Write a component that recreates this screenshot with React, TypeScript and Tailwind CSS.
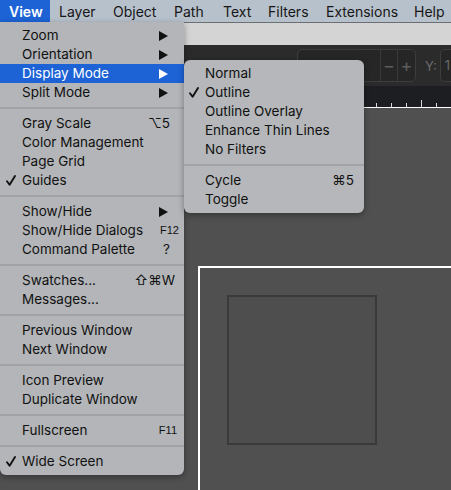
type Item = {
  label: string;
  check?: boolean;
  arrow?: boolean;
  active?: boolean;
  key?: string;
  small?: boolean;
  pr?: string;
};

const mainGroups: Item[][] = [
  [
    { label: 'Zoom', arrow: true },
    { label: 'Orientation', arrow: true },
    { label: 'Display Mode', arrow: true, active: true },
    { label: 'Split Mode', arrow: true },
  ],
  [
    { label: 'Gray Scale', key: '⌥5', pr: 'pr-[14px]' },
    { label: 'Color Management' },
    { label: 'Page Grid' },
    { label: 'Guides', check: true },
  ],
  [
    { label: 'Show/Hide', arrow: true },
    { label: 'Show/Hide Dialogs', key: 'F12', small: true, pr: 'pr-[5px]' },
    { label: 'Command Palette', key: '?', pr: 'pr-[14px]' },
  ],
  [
    { label: 'Swatches...', key: '⇧⌘W', pr: 'pr-[9px]' },
    { label: 'Messages...' },
  ],
  [{ label: 'Previous Window' }, { label: 'Next Window' }],
  [{ label: 'Icon Preview' }, { label: 'Duplicate Window' }],
  [{ label: 'Fullscreen', key: 'F11', small: true, pr: 'pr-[7px]' }],
  [{ label: 'Wide Screen', check: true }],
];

const subGroups: Item[][] = [
  [
    { label: 'Normal' },
    { label: 'Outline', check: true },
    { label: 'Outline Overlay' },
    { label: 'Enhance Thin Lines' },
    { label: 'No Filters' },
  ],
  [
    { label: 'Cycle', key: '⌘5', pr: 'pr-[10px]' },
    { label: 'Toggle' },
  ],
];

const Arrow = ({ light }: { light?: boolean }) => (
  <svg width="9" height="10" viewBox="0 0 9 10">
    <polygon points="0,0 9,5 0,10" fill={light ? '#ffffff' : '#111111'} />
  </svg>
);

const Check = () => (
  <svg width="10" height="11" viewBox="0 0 10 11">
    <path d="M1 6.2 L3.6 9.8 L9 1" fill="none" stroke="#111111" strokeWidth="1.9" strokeLinecap="round" strokeLinejoin="round" />
  </svg>
);

const Row = ({ item, sub }: { item: Item; sub?: boolean }) => (
  <div
    className={`flex h-[19px] items-center ${item.pr ?? 'pr-[16px]'} ${
      item.active ? 'bg-[#1d63d6] text-white' : 'text-[#111111]'
    }`}
  >
    <span className={`flex ${sub ? 'w-[21px] pl-[5px]' : 'w-[22px] pl-[6px]'}`}>
      {item.check && <Check />}
    </span>
    <span className="flex-1">{item.label}</span>
    {item.arrow && <Arrow light={item.active} />}
    {item.key && (
      <span
        className={
          item.small
            ? "text-[11px] font-medium font-['Liberation_Sans',sans-serif]"
            : "font-['Inter','DejaVu_Sans',sans-serif]"
        }
      >
        {item.key}
      </span>
    )}
  </div>
);

const Menu = ({ groups, sub }: { groups: Item[][]; sub?: boolean }) => (
  <div className="flex flex-col">
    {groups.map((g, i) => (
      <div key={i}>
        {i > 0 && (
          <div className="h-[12px] pt-[5px]">
            <div className="h-[2px] bg-[#a1a3a6]" />
          </div>
        )}
        {g.map((item) => (
          <Row key={item.label} item={item} sub={sub} />
        ))}
      </div>
    ))}
  </div>
);

const menubar: [string, string][] = [
  ['Layer', 'w-[54px]'],
  ['Object', 'w-[61px]'],
  ['Path', 'w-[49px]'],
  ['Text', 'w-[45px]'],
  ['Filters', 'w-[58px]'],
  ['Extensions', 'w-[88px]'],
  ['Help', 'w-[37px]'],
];

export default function App() {
  return (
    <div className="relative w-[451px] h-[490px] overflow-hidden bg-[#505050] font-['Inter','Liberation_Sans',sans-serif] text-[13.5px]">
      {/* menu bar */}
      <div className="flex h-[22px] items-center bg-[#b7c1cc] text-[#161616] text-[14px]">
        <div className="flex h-full w-[50px] items-center bg-[#1d63d6] pl-[9px] font-semibold text-white">
          View
        </div>
        <div className="ml-[9px] flex">
          {menubar.map(([t, w]) => (
            <span key={t} className={w}>
              {t}
            </span>
          ))}
        </div>
      </div>

      {/* window title strip */}
      <div className="h-[23px] border-t border-[#6b6e72] bg-[#d4d4d4]" />

      {/* toolbar */}
      <div className="flex h-[41px] items-start bg-[#2b2b2b] pl-[297px] pt-[4px]">
        <div className="flex h-[33px] w-[119px] items-center justify-end rounded-[5px] border border-[#3d3d3d] bg-[#262626]">
          <div className="flex h-full items-center border-l border-[#3a3a3a]">
            <span className="flex w-[16px] justify-center text-[18px] text-[#5c5c5c]">−</span>
            <span className="flex h-full w-[18px] items-center justify-center border-l border-[#3a3a3a] text-[18px] text-[#5c5c5c]">
              +
            </span>
          </div>
        </div>
        <span className="ml-[9px] mt-[8px] text-[13px] text-[#6a6a6a]">Y:</span>
        <div className="ml-[3px] flex h-[33px] flex-1 items-center rounded-l-[5px] border border-r-0 border-[#3d3d3d] bg-[#262626] pl-[4px] text-[13px] text-[#6a6a6a]">
          1
        </div>
      </div>

      {/* ruler */}
      <div className="h-[22px] border-b border-white bg-[#1d1e21]">
        <svg width="451" height="21" viewBox="0 0 451 21">
          {[376, 391, 406, 421, 436].map((x) => (
            <line
              key={x}
              x1={x + 0.5}
              x2={x + 0.5}
              y1={x === 421 ? 14 : 17}
              y2={21}
              stroke="#d8d8d8"
              strokeWidth="1"
            />
          ))}
        </svg>
      </div>

      {/* canvas */}
      <div className="flex h-[382px] pl-[198px] pt-[158px]">
        <div className="flex-1 border-l-2 border-t-2 border-white pl-[27px] pt-[27px]">
          <div className="h-[150px] w-[150px] border-2 border-[#3a3a3a] bg-[#4e4e4e]" />
        </div>
      </div>

      {/* View menu */}
      <div className="absolute left-0 top-[22px] w-[184px] rounded-b-[6px] bg-[#b3b5b8] pb-[4px] pt-[4px] shadow-[0_2px_6px_rgba(0,0,0,0.35)]">
        <Menu groups={mainGroups} />
      </div>

      {/* Display Mode submenu */}
      <div className="absolute left-[184px] top-[60px] w-[180px] rounded-[6px] bg-[#b5b7ba] pb-[4px] pt-[4px] shadow-[0_2px_6px_rgba(0,0,0,0.35)]">
        <Menu groups={subGroups} sub />
      </div>
    </div>
  );
}
